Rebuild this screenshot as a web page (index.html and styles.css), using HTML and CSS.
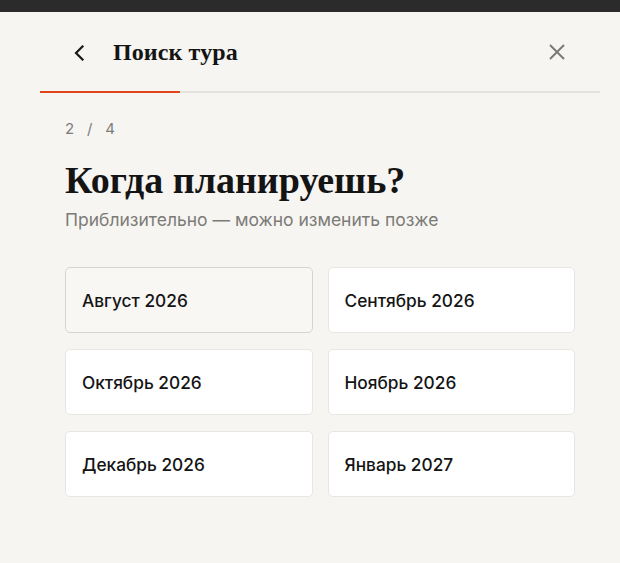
FILE: index.html
```html
<!DOCTYPE html>
<html lang="ru">
<head>
<meta charset="utf-8">
<title>Поиск тура</title>
<link rel="stylesheet" href="styles.css">
</head>
<body>
<div class="topbar"></div>
<div class="panel">
  <header class="head">
    <button class="icon-btn back" aria-label="Назад">
      <svg width="12" height="16" viewBox="0 0 12 16"><path d="M9.5 1.5 3 8l6.5 6.5" fill="none" stroke="#1a1a1a" stroke-width="2.2" stroke-linecap="square"/></svg>
    </button>
    <h1 class="head-title">Поиск тура</h1>
    <button class="icon-btn close" aria-label="Закрыть">
      <svg width="16" height="16" viewBox="0 0 16 16"><path d="M1 1l14 14M15 1 1 15" fill="none" stroke="#7a7a78" stroke-width="2"/></svg>
    </button>
  </header>
  <div class="progress"><div class="progress-fill" style="width:25%"></div></div>
  <div class="body">
    <div class="step">2 / 4</div>
    <h2 class="question">Когда планируешь?</h2>
    <p class="hint">Приблизительно — можно изменить позже</p>
    <div class="options">
      <button class="option option-active">Август 2026</button>
      <button class="option">Сентябрь 2026</button>
      <button class="option">Октябрь 2026</button>
      <button class="option">Ноябрь 2026</button>
      <button class="option">Декабрь 2026</button>
      <button class="option">Январь 2027</button>
    </div>
  </div>
</div>
</body>
</html>
```

FILE: styles.css
```css
* { box-sizing: border-box; }
html, body { margin: 0; padding: 0; }
body {
  background: #f6f5f1;
  font-family: Inter, "Noto Sans", sans-serif;
  color: #141414;
  width: 620px;
  height: 563px;
  overflow: hidden;
}
.topbar {
  height: 12px;
  background: #2b2b2b;
}
.panel {
  margin: 0 20px 0 40px;
  width: 560px;
}
.head {
  height: 79px;
  display: flex;
  align-items: center;
  padding-left: 33px;
  padding-right: 35px;
}
.icon-btn {
  border: 0;
  background: none;
  padding: 0;
  display: flex;
  align-items: center;
  justify-content: center;
  cursor: pointer;
}
.back { width: 12px; height: 16px; margin-right: 28px; margin-top: 2px; }
.close { width: 16px; height: 16px; margin-left: auto; }
.head-title {
  margin: 0;
  font-family: "Liberation Serif", "DejaVu Serif", serif;
  font-weight: 700;
  font-size: 24px;
  color: #141414;
  letter-spacing: 0.1px;
  padding-top: 2px;
}
.progress {
  height: 2px;
  background: #e4e2de;
}
.progress-fill {
  height: 2px;
  background: #e0461b;
}
.body {
  padding: 26px 25px 0 25px;
}
.step {
  font-size: 15px;
  color: #7d7d7b;
  letter-spacing: 2.3px;
  word-spacing: 4px;
  line-height: 20px;
}
.question {
  margin: 17px 0 0 0;
  font-family: "Liberation Serif", "DejaVu Serif", serif;
  font-weight: 700;
  font-size: 38px;
  line-height: 48px;
  color: #141414;
}
.hint {
  margin: 4px 0 0 0;
  font-size: 17.5px;
  line-height: 24px;
  color: #7c7b78;
}
.options {
  margin-top: 35px;
  display: grid;
  grid-template-columns: 1fr 1fr;
  column-gap: 15px;
  row-gap: 16px;
}
.option {
  height: 66px;
  background: #ffffff;
  border: 1px solid #e8e6e2;
  border-radius: 5px;
  text-align: left;
  padding: 0 16px;
  font-family: Inter, "Noto Sans", sans-serif;
  font-size: 17.3px;
  font-weight: 500;
  color: #141414;
  cursor: pointer;
}
.option-active {
  background: #f8f7f4;
  border-color: #d6d4d0;
}
```
